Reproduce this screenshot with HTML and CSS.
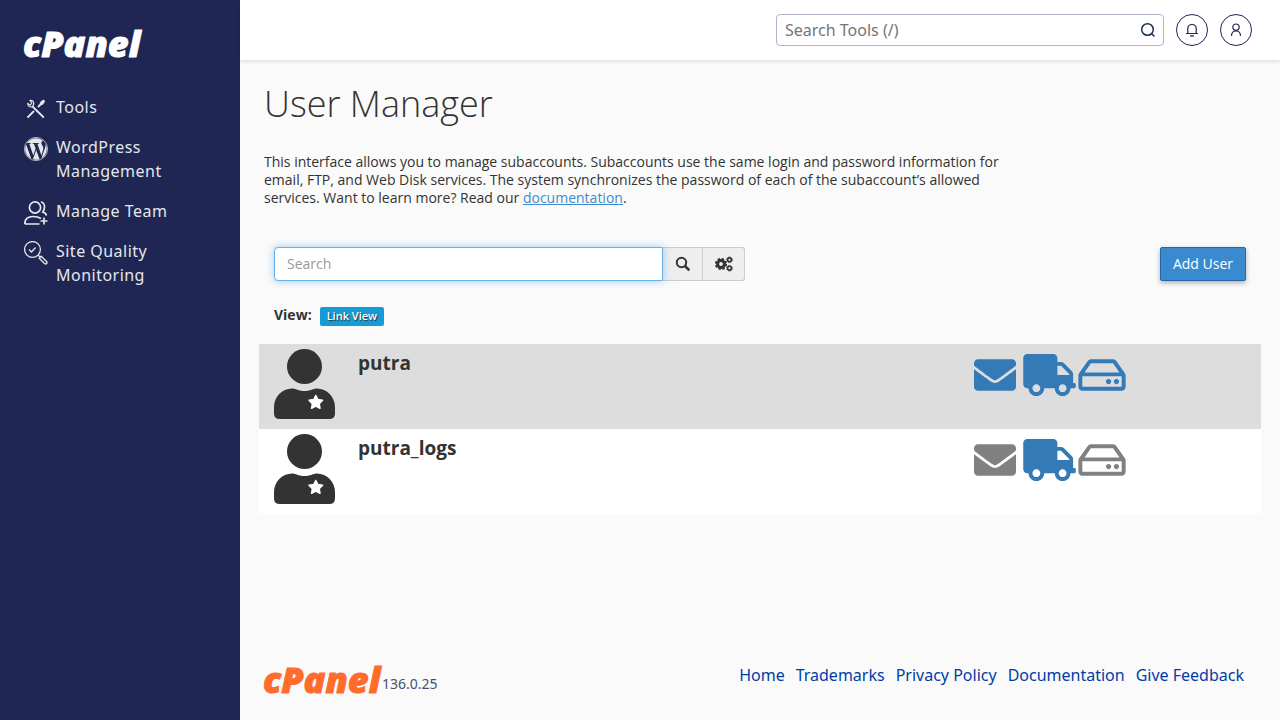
FILE: index.html
```html
<!DOCTYPE html>
<html lang="en">
<head>
<meta charset="utf-8">
<title>cPanel - User Manager</title>
<link rel="stylesheet" href="styles.css">
</head>
<body>
<svg class="defs" aria-hidden="true">
  <symbol id="user" viewBox="0 0 61 70">
    <circle cx="30.500" cy="17.500" r="17.500" fill="#333"/>
    <path fill="#333" d="M18 39.500C22 39.500 24 42 30.500 42S39 39.500 43 39.500C53 39.500 61 48 61 58V64.500Q61 70 55 70H6Q0 70 0 64.500V58C0 48 8 39.500 18 39.500Z"/>
    <path fill="#fff" stroke="#fff" stroke-width="1.500" stroke-linejoin="round" d="M41.800 46.500L43.900 50.600L48.600 51.300L45.200 54.600L46 59.300L41.800 57.100L37.600 59.300L38.400 54.600L35 51.300L39.700 50.600Z"/>
  </symbol>
  <symbol id="mail" viewBox="0 0 512 512"><path fill="currentColor" d="M502.300 190.800c3.900-3.100 9.700-.2 9.700 4.700V400c0 26.500-21.500 48-48 48H48c-26.500 0-48-21.500-48-48V195.600c0-5 5.700-7.800 9.700-4.700 22.400 17.400 52.100 39.500 154.100 113.600 21.100 15.400 56.700 47.800 92.200 47.600 35.700.3 72-32.800 92.300-47.600 102-74.100 131.600-96.300 154-113.700zM256 320c23.200.4 56.600-29.200 73.400-41.400 132.700-96.300 142.800-104.700 173.400-128.700 5.800-4.500 9.200-11.500 9.200-18.900v-19c0-26.500-21.500-48-48-48H48c-26.500 0-48 21.500-48 48v19c0 7.400 3.400 14.300 9.200 18.900 30.600 23.900 40.700 32.400 173.400 128.700 16.800 12.200 50.200 41.800 73.400 41.400z"/></symbol>
  <symbol id="truck" viewBox="0 0 640 512"><path fill="currentColor" d="M624 352h-16V243.900c0-12.700-5.100-24.900-14.100-33.900L494 110.100c-9-9-21.200-14.100-33.900-14.100H416V48c0-26.500-21.500-48-48-48H48C21.500 0 0 21.500 0 48v320c0 26.500 21.500 48 48 48h16c0 53 43 96 96 96s96-43 96-96h128c0 53 43 96 96 96s96-43 96-96h48c8.800 0 16-7.200 16-16v-32c0-8.800-7.200-16-16-16zM160 464c-26.500 0-48-21.500-48-48s21.500-48 48-48 48 21.500 48 48-21.500 48-48 48zm320 0c-26.500 0-48-21.500-48-48s21.500-48 48-48 48 21.500 48 48-21.500 48-48 48zm80-208H416V144h44.100l99.900 99.900V256z"/></symbol>
  <symbol id="disk" viewBox="0 0 576 512"><path fill="currentColor" d="M567.403 235.642L462.323 84.589A48 48 0 0 0 422.919 64H153.081a48 48 0 0 0-39.404 20.589L8.597 235.642A48 48 0 0 0 0 263.054V400c0 26.510 21.490 48 48 48h480c26.510 0 48-21.490 48-48V263.054c0-9.801-3-19.366-8.597-27.412zM153.081 112h269.838l77.913 112H75.168l77.913-112zM528 400H48V272h480v128zm-32-64c0 17.673-14.327 32-32 32s-32-14.327-32-32 14.327-32 32-32 32 14.327 32 32zm-96 0c0 17.673-14.327 32-32 32s-32-14.327-32-32 14.327-32 32-32 32 14.327 32 32z"/></symbol>
</svg>
<div class="app">
  <aside class="sidebar">
    <a class="brand" href="#" aria-label="cPanel home"><svg class="logo" viewBox="0 0 118 26"><text x="-1" y="25">cPanel</text></svg></a>
    <nav class="nav">
      <a href="#">
        <svg viewBox="0 0 24 24" fill="none" stroke="currentColor" stroke-width="1.800" stroke-linecap="round"><path d="M9 10L19.300 20M4 20L9.500 14.500M14.500 9.500L17 7"/><path d="M16.700 7.300Q16.300 5.500 19.300 3.700L20 4.300Q18.500 7.500 16.700 7.300Z" fill="currentColor"/><path d="M6 3.500Q9.500 3 9.800 6.500L9 9L7.500 10Q4 10 3.700 6.500L6.300 8L7.800 6Z" stroke-width="1.200"/></svg>
        <span>Tools</span></a>
      <a href="#">
        <svg viewBox="0 0 24 24" fill="currentColor"><path d="M21.469 6.825c.84 1.537 1.318 3.300 1.318 5.175 0 3.979-2.156 7.456-5.363 9.325l3.295-9.527c.615-1.540.820-2.771.820-3.864 0-.405-.026-.780-.070-1.110m-7.981.105c.647-.030 1.232-.105 1.232-.105.582-.075.514-.930-.067-.899 0 0-1.755.135-2.880.135-1.064 0-2.850-.150-2.850-.150-.585-.030-.661.855-.075.885 0 0 .540.061 1.125.090l1.680 4.605-2.370 7.080L5.354 6.900c.649-.030 1.234-.100 1.234-.100.585-.075.516-.930-.065-.896 0 0-1.746.138-2.874.138-.200 0-.438-.008-.690-.015C4.911 3.150 8.235 1.215 12 1.215c2.809 0 5.365 1.072 7.286 2.833-.046-.003-.091-.009-.141-.009-1.060 0-1.812.923-1.812 1.914 0 .890.513 1.643 1.060 2.531.411.720.890 1.643.890 2.977 0 .915-.354 1.994-.821 3.479l-1.075 3.585-3.900-11.610zM12 22.784c-1.059 0-2.081-.153-3.048-.437l3.237-9.406 3.315 9.087c.024.053.050.101.078.149-1.120.393-2.325.609-3.582.609M1.211 12c0-1.564.336-3.050.935-4.390L7.290 21.709C3.694 19.960 1.212 16.271 1.211 12"/><circle cx="12" cy="12" r="11.600" fill="none" stroke="currentColor" stroke-width=".7"/></svg>
        <span>WordPress Management</span></a>
      <a href="#">
        <svg viewBox="0 0 24 24" fill="none" stroke="currentColor" stroke-width="1.700"><circle cx="11" cy="6.500" r="5.600"/><path d="M17 .8Q20.500 2 20.500 6Q20.500 9 18.800 11Q22 12 22.500 14.500M.8 23Q.8 15.500 9 15.500Q14 15.500 17 17.500M.8 23H15.500M20 16.500V23.500M16.500 20H23.500"/></svg>
        <span>Manage Team</span></a>
      <a href="#">
        <svg viewBox="0 0 24 24" fill="none" stroke="currentColor" stroke-width="1.300"><circle cx="8.500" cy="8.500" r="7.900"/><path d="M5 8.500L7.500 11L11.500 6.500M14 14L16 16M15.200 17.200L17.200 15.200L22.500 20.500Q23.500 21.700 22.600 22.600Q21.700 23.500 20.500 22.500Z"/></svg>
        <span>Site Quality Monitoring</span></a>
    </nav>
  </aside>
  <div class="page">
    <header class="topbar">
      <form class="tool-search">
        <input type="text" aria-label="Search Tools" placeholder="Search Tools (/)">
        <button type="button" aria-label="Search"><svg width="16" height="16" viewBox="0 0 16 16" fill="none" stroke="#1d2f55" stroke-width="1.500"><circle cx="7.500" cy="7.500" r="5.800"/><path d="M11.700 11.700L14.500 14.500"/></svg></button>
      </form>
      <button class="round" type="button" aria-label="Notifications"><svg width="14" height="14" viewBox="0 0 14 14" fill="none" stroke="#1f2553" stroke-width="1.200"><path d="M1 10.500H13M2.800 10.500V5.500Q3 1.500 7 1.500T11.200 5.500V10.500M5 12.800H9"/></svg></button>
      <button class="round" type="button" aria-label="Account"><svg width="14" height="14" viewBox="0 0 14 14" fill="none" stroke="#1f2553" stroke-width="1.200"><circle cx="7" cy="4.200" r="3.200"/><path d="M2.500 13Q2.500 8 7 8T11.500 13"/></svg></button>
    </header>
    <main>
      <h1>User Manager</h1>
      <p class="intro">This interface allows you to manage subaccounts. Subaccounts use the same login and password information for email, FTP, and Web Disk services. The system synchronizes the password of each of the subaccount’s allowed services. Want to learn more? Read our <a href="#">documentation</a>.</p>
      <div class="toolbar">
        <div class="group">
          <input type="text" aria-label="Search users" placeholder="Search">
          <button type="button" aria-label="Search"><svg width="16" height="16" viewBox="0 0 16 16" fill="none" stroke="#333"><circle cx="6.500" cy="6.500" r="4.700" stroke-width="2"/><path d="M10 10L14.300 14.300" stroke-width="2.600"/></svg></button>
          <button type="button" aria-label="Settings"><svg width="18" height="16" viewBox="0 0 18 16" fill="none" stroke="#333"><circle cx="6" cy="8" r="3.400" stroke-width="3"/><circle cx="6" cy="8" r="5.200" stroke-width="1.800" stroke-dasharray="2.450 1.634"/><circle cx="14.500" cy="3.800" r="1.900" stroke-width="1.600"/><circle cx="14.500" cy="3.800" r="2.900" stroke-width=".8" stroke-dasharray="1.300 .978"/><circle cx="14.500" cy="12.200" r="1.900" stroke-width="1.600"/><circle cx="14.500" cy="12.200" r="2.900" stroke-width=".8" stroke-dasharray="1.300 .978"/></svg></button>
        </div>
        <button class="primary" type="button">Add User</button>
      </div>
      <div class="views"><strong>View:</strong><button type="button">Link View</button></div>
      <ul class="users">
        <li>
          <svg class="avatar"><use href="#user"/></svg>
          <h2>putra</h2>
          <div class="services">
            <svg class="mail"><use href="#mail"/></svg><svg class="truck"><use href="#truck"/></svg><svg class="disk"><use href="#disk"/></svg>
          </div>
        </li>
        <li>
          <svg class="avatar"><use href="#user"/></svg>
          <h2>putra_logs</h2>
          <div class="services">
            <svg class="mail off"><use href="#mail"/></svg><svg class="truck"><use href="#truck"/></svg><svg class="disk off"><use href="#disk"/></svg>
          </div>
        </li>
      </ul>
    </main>
    <footer>
      <div class="version"><svg class="logo" viewBox="0 0 118 26" aria-label="cPanel"><text x="-1" y="25">cPanel</text></svg><span>136.0.25</span></div>
      <nav class="links"><a href="#">Home</a><a href="#">Trademarks</a><a href="#">Privacy Policy</a><a href="#">Documentation</a><a href="#">Give Feedback</a></nav>
    </footer>
  </div>
</div>
</body>
</html>
```
FILE: styles.css
```css
* { box-sizing: border-box; }
body { margin: 0; background: #fafafa; color: #333; font: 14px/18px "Open Sans", sans-serif; }
button, input { font: inherit; color: inherit; margin: 0; }
svg { display: block; flex: none; }
.defs { position: absolute; width: 0; height: 0; }
.app { display: flex; min-height: 100vh; }
.logo { width: 118px; height: 26px; overflow: visible; fill: currentColor; stroke: currentColor; stroke-width: 1px; stroke-linejoin: round; font: italic 800 36px "Open Sans", sans-serif; }

.sidebar { width: 240px; flex: none; background: #1f2653; color: #e5e6ea; padding: 32px 0; }
.brand { display: block; color: #fff; padding: 0 24px 29px; text-decoration: none; }
.nav a { display: flex; align-items: flex-start; gap: 8px; padding: 8px 24px; color: inherit; text-decoration: none; font: 16px/24px "Noto Sans", sans-serif; letter-spacing: 0.03em; }
.nav svg { width: 24px; height: 24px; margin: 2px 0 -2px; }

.page { flex: 1; min-width: 0; display: flex; flex-direction: column; }
.topbar { height: 60px; display: flex; align-items: center; justify-content: flex-end; gap: 12px; padding: 0 28px; background: #fff; box-shadow: 0 2px 4px rgba(0, 0, 0, .1); }
.tool-search { display: flex; width: 388px; height: 32px; border: 1px solid #b4b3c8; border-radius: 4px; background: #fff; }
.tool-search input { flex: 1; min-width: 0; border: 0; padding: 0 8px; background: none; font: 16px/24px "Noto Sans", sans-serif; outline: 0; }
.tool-search input::placeholder { color: #757575; }
.tool-search button { display: grid; place-items: center; width: 30px; padding: 0; border: 0; background: none; }
.round { display: grid; place-items: center; width: 32px; height: 32px; padding: 0; border: 1px solid #1f2553; border-radius: 50%; background: #fff; }

main { flex: 1; padding: 20px 19px 0; }
h1 { margin: 0; padding: 0 5px; font-size: 36px; line-height: 48px; font-weight: 300; }
.intro { margin: 25px 5px 40px; max-width: 750px; }
.intro a { color: #428bca; }
.toolbar { display: flex; justify-content: space-between; padding: 0 15px; }
.group { display: flex; width: 471px; height: 34px; }
.group input { position: relative; flex: 1; min-width: 0; padding: 0 12px; border: 1px solid #66afe9; border-radius: 4px 0 0 4px; background: #fff; outline: 0; box-shadow: 0 0 8px rgba(102, 175, 233, .6); }
.group input::placeholder { color: #999; }
.group button { display: grid; place-items: center; width: 40px; padding: 0; border: 1px solid #ccc; border-left: 0; background: #eee; }
.group button:last-child { width: 42px; border-radius: 0 3px 3px 0; }
.primary { height: 34px; padding: 0 12px; color: #fff; background: #3a8ad0; border: 1px solid #2566a8; border-radius: 2px; box-shadow: 0 2px 5px rgba(0, 0, 0, .3); }
.views { display: flex; align-items: flex-end; gap: 8px; padding: 25px 15px 18px; }
.views strong { padding-bottom: 2px; }
.views button { height: 19px; padding: 0 7px 2px; border: 0; border-radius: 2px; background: #179bd7; color: #fff; font-size: 11px; line-height: 17px; font-weight: 600; text-shadow: 1px 1px 1px #333; }
.users { list-style: none; margin: 0; padding: 0; }
.users li { display: flex; min-height: 85px; padding: 5px 15px 10px; background: #fff; }
.users li:nth-child(odd) { background: #ddd; }
.avatar { width: 61px; height: 70px; }
.users h2 { flex: 1; margin: 0; padding: 0 23px; font-size: 19px; line-height: 28px; font-weight: 700; }
.services { display: flex; width: 272px; padding-top: 5px; color: #337ab7; }
.services svg { height: 42px; }
.services .mail { width: 42px; margin-right: 7px; }
.services .truck { width: 53px; margin-right: 2px; }
.services .disk { width: 48px; }
.services .off { color: #808080; }

footer { display: flex; justify-content: space-between; padding: 0 36px 26px 24px; }
.version { display: flex; align-items: flex-end; padding-top: 5px; color: #ff6c2c; }
.version span { color: #45516b; font: 14px/20px "Noto Sans", sans-serif; }
.links { display: flex; gap: 11px; font: 16px/24px "Noto Sans", sans-serif; }
.links a { color: #003da6; text-decoration: none; }
```
